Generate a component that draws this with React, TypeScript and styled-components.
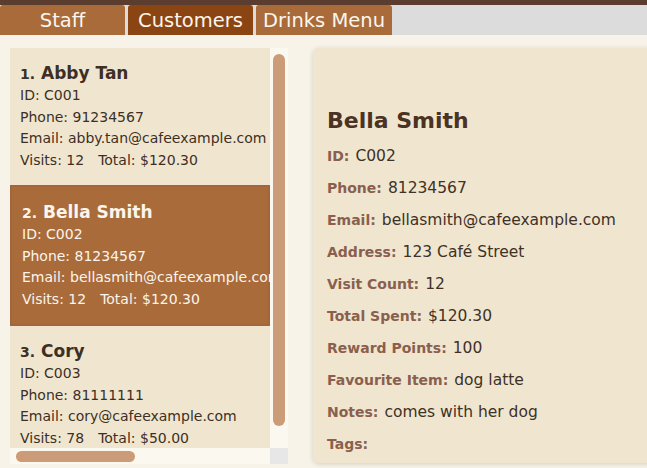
import React from 'react';
import styled, { createGlobalStyle } from 'styled-components';

interface Customer {
  id: string;
  name: string;
  phone: string;
  email: string;
  visits: number;
  total: string;
}

const customers: Customer[] = [
  { id: 'C001', name: 'Abby Tan', phone: '91234567', email: 'abby.tan@cafeexample.com', visits: 12, total: '$120.30' },
  { id: 'C002', name: 'Bella Smith', phone: '81234567', email: 'bellasmith@cafeexample.com', visits: 12, total: '$120.30' },
  { id: 'C003', name: 'Cory', phone: '81111111', email: 'cory@cafeexample.com', visits: 78, total: '$50.00' },
];

const details: [string, string][] = [
  ['ID:', 'C002'],
  ['Phone:', '81234567'],
  ['Email:', 'bellasmith@cafeexample.com'],
  ['Address:', '123 Café Street'],
  ['Visit Count:', '12'],
  ['Total Spent:', '$120.30'],
  ['Reward Points:', '100'],
  ['Favourite Item:', 'dog latte'],
  ['Notes:', 'comes with her dog'],
  ['Tags:', ''],
];

const tabs = ['Staff', 'Customers', 'Drinks Menu'];

const App: React.FC = () => {
  const selected = 1;
  return (
    <>
      <GlobalStyle />
      <Page>
        <TabBar>
          {tabs.map(t => (
            <Tab key={t} active={t === 'Customers'}>{t}</Tab>
          ))}
        </TabBar>
        <Main>
          <ListBox>
            <ListViewport>
              {customers.map((c, i) => (
                <Card key={c.id} selected={i === selected}>
                  <CardTitle>
                    <Index>{i + 1}.</Index>
                    <Name>{c.name}</Name>
                  </CardTitle>
                  <Line>ID: {c.id}</Line>
                  <Line>Phone: {c.phone}</Line>
                  <Line>Email: {c.email}</Line>
                  <Line>
                    Visits: {c.visits}
                    <TotalSpan>Total: {c.total}</TotalSpan>
                  </Line>
                </Card>
              ))}
            </ListViewport>
            {/* fake scrollbars, the headless browser hides real ones */}
            <VTrack>
              <VThumb />
            </VTrack>
            <HTrack>
              <HThumb />
            </HTrack>
            <Corner />
          </ListBox>
          <DetailPanel>
            <DetailTitle>Bella Smith</DetailTitle>
            {details.map(([label, value]) => (
              <DetailRow key={label}>
                <Label>{label}</Label>
                <Value>{value}</Value>
              </DetailRow>
            ))}
          </DetailPanel>
        </Main>
      </Page>
    </>
  );
};

const GlobalStyle = createGlobalStyle`
  html, body {
    margin: 0;
    padding: 0;
    overflow: hidden;
    background: #f8f3e8;
    font-family: "DejaVu Sans", "Noto Sans", sans-serif;
  }
`;

const Page = styled.div`
  width: 647px;
  height: 468px;
  display: flex;
  flex-direction: column;
  overflow: hidden;
  background: #f8f3e8;
`;

const TabBar = styled.div`
  display: flex;
  gap: 2px;
  height: 35px;
  padding-top: 5px;
  box-sizing: border-box;
  background: linear-gradient(#5b3d2f 0 5px, #dcdcdc 5px);
`;

const Tab = styled.div<{ active?: boolean }>`
  min-width: 125px;
  padding: 0 7px;
  box-sizing: border-box;
  display: flex;
  align-items: center;
  justify-content: center;
  background: ${p => (p.active ? '#8b4513' : '#a96b3a')};
  color: #fbf6ee;
  font-size: 19.5px;
  border-radius: 3px 3px 0 0;
  & + & {
    margin-left: 1px;
  }
`;

const Main = styled.div`
  flex: 1;
  display: flex;
  align-items: flex-start;
  gap: 25px;
  padding: 13px 0 5px 10px;
  min-height: 0;
`;

const ListBox = styled.div`
  flex: none;
  display: grid;
  grid-template-columns: 260px 18px;
  grid-template-rows: 400px 16px;
`;

const ListViewport = styled.div`
  overflow: hidden;
  background: #f0e6d0;
`;

const VTrack = styled.div`
  background: #fbf8f0;
  padding: 6px 3px 22px;
  display: flex;
`;

const VThumb = styled.div`
  flex: 1;
  background: #cc9b78;
  border-radius: 6px;
`;

const HTrack = styled.div`
  background: #fbf8f0;
  padding: 3px 0 2px 6px;
  display: flex;
`;

const HThumb = styled.div`
  width: 119px;
  background: #cc9b78;
  border-radius: 6px;
`;

const Corner = styled.div`
  background: #e7e7e7;
`;

const Card = styled.div<{ selected?: boolean }>`
  padding: 13px 10px 14px;
  background: ${p => (p.selected ? '#a96b3a' : '#f0e6d0')};
  border: ${p => (p.selected ? '2px solid #a3653a' : 'none')};
  color: ${p => (p.selected ? '#fbf5ec' : '#3d2f24')};
  white-space: nowrap;
`;

const CardTitle = styled.div`
  display: flex;
  align-items: baseline;
  height: 24px;
  line-height: 24px;
`;

const Index = styled.span`
  font-size: 14px;
  font-weight: 600;
  width: 21px;
`;

const Name = styled.span`
  font-size: 17px;
  font-weight: 700;
`;

const Line = styled.div`
  font-size: 14px;
  line-height: 21.5px;
`;

const TotalSpan = styled.span`
  margin-left: 14px;
`;

const DetailPanel = styled.div`
  flex: 1;
  align-self: stretch;
  min-width: 420px;
  background: #f0e6d0;
  border-radius: 6px;
  box-shadow: 0 1px 5px rgba(60, 40, 20, 0.18);
  padding: 56px 14px 0;
  box-sizing: border-box;
`;

const DetailTitle = styled.div`
  font-size: 22px;
  font-weight: 700;
  color: #4b3222;
  line-height: 34px;
  margin-bottom: 2px;
`;

const DetailRow = styled.div`
  display: flex;
  align-items: baseline;
  gap: 6px;
  height: 32px;
  line-height: 32px;
`;

const Label = styled.span`
  font-size: 14px;
  font-weight: 700;
  color: #8a5f4d;
`;

const Value = styled.span`
  font-size: 15.5px;
  color: #3f3126;
`;

export default App;
